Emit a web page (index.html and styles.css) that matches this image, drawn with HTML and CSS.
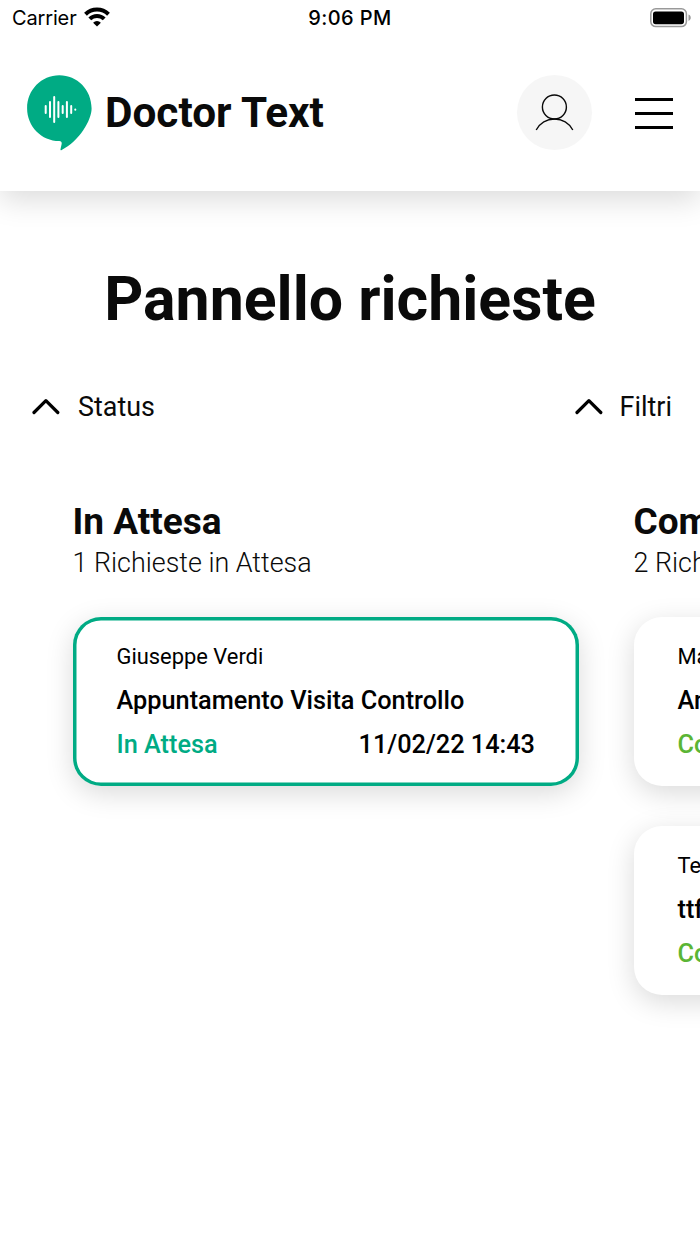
FILE: index.html
```
<!DOCTYPE html>
<html lang="it">
<head>
	<meta charset="utf-8">
	<title>Doctor Text</title>
	<link rel="stylesheet" href="styles.css">
</head>
<body>
	<div class="statusbar">
		<div class="carrier">
			<span>Carrier</span>
			<svg class="wifi" width="26" height="20" viewBox="0 0 26 20">
				<g fill="none" stroke="#000" stroke-width="4">
					<path d="M1.5 7.2a16.4 16.4 0 0 1 23 0"/>
					<path d="M5.8 11.9a10.2 10.2 0 0 1 14.4 0"/>
				</g>
				<path d="M13 19.4l-3.9-3.7a5.4 5.4 0 0 1 7.8 0z"/>
			</svg>
		</div>
		<span class="clock">9:06 PM</span>
		<svg class="battery" width="42" height="20" viewBox="0 0 42 20">
			<rect x="0.8" y="0.8" width="35.6" height="17.8" rx="5" fill="none" stroke="#999" stroke-width="1.5"/>
			<rect x="3" y="3.4" width="31" height="12.8" rx="2.6"/>
			<path d="M38.5 6.6c3 1.2 3 5.2 0 6.4z" fill="#999"/>
		</svg>
	</div>

	<header class="header">
		<div class="brand">
			<svg class="logo" width="65" height="76" viewBox="0 0 65 76">
				<path fill="#00ab84" d="M32.3 0.3C50.3 0.3 64.6 14.8 64.6 33.5C64.6 45 52.5 66 34.3 75.2Q33.2 75.6 33.5 74.3L34.7 68.7Q34.9 66.1 32.3 66C14.5 66 0.1 51.5 0.1 33.2C0.1 14.8 14.5 0.3 32.3 0.3Z"/>
				<g stroke="#fff" stroke-width="2" stroke-linecap="round">
					<path d="M18.7 31v7M23 27v15M27.2 22v25M31.4 27v15M35.7 31v7M39.9 27v15M44.2 31v7M48.3 34.5v0.2"/>
				</g>
			</svg>
			<span class="brand-name">Doctor Text</span>
		</div>
		<div class="actions">
			<div class="avatar">
				<svg width="75" height="75" viewBox="0 0 75 75" fill="none" stroke="#0a0a0a" stroke-width="1.4">
					<circle cx="37.4" cy="32" r="12"/>
					<path d="M19.2 55a20.7 20.7 0 0 1 36.6 0"/>
				</svg>
			</div>
			<div class="menu">
				<span></span>
				<span></span>
				<span></span>
			</div>
		</div>
	</header>

	<main>
		<h1>Pannello richieste</h1>

		<div class="toolbar">
			<div class="toggle">
				<svg width="28" height="17" viewBox="0 0 28 17"><path d="M2 14.5L13.9 2.6L25.8 14.5"/></svg>
				<span>Status</span>
			</div>
			<div class="toggle">
				<svg width="28" height="17" viewBox="0 0 28 17"><path d="M2 14.5L13.9 2.6L25.8 14.5"/></svg>
				<span>Filtri</span>
			</div>
		</div>

		<div class="board">
			<section class="column">
				<h2>In Attesa</h2>
				<p class="count">1 Richieste in Attesa</p>
				<div class="card waiting">
					<p class="name">Giuseppe Verdi</p>
					<p class="subject">Appuntamento Visita Controllo</p>
					<div class="meta">
						<span class="state">In Attesa</span>
						<span>11/02/22 14:43</span>
					</div>
				</div>
			</section>
			<section class="column">
				<h2>Completate</h2>
				<p class="count">2 Richieste Completate</p>
				<div class="card done">
					<p class="name">Mario Rossi</p>
					<p class="subject">Analisi</p>
					<div class="meta">
						<span class="state">Completata</span>
					</div>
				</div>
				<div class="card done">
					<p class="name">Test</p>
					<p class="subject">ttf</p>
					<div class="meta">
						<span class="state">Completata</span>
					</div>
				</div>
			</section>
		</div>
	</main>
</body>
</html>
```
FILE: styles.css
```
* {
	margin: 0;
	padding: 0;
	box-sizing: border-box;
}

body {
	height: 1244px;
	overflow: hidden;
	background: #fff;
	color: #0a0a0a;
	font-family: Roboto, "Liberation Sans", sans-serif;
}

svg {
	display: block;
	flex: none;
}

/* phone status bar, keeps the header shadow below it */
.statusbar {
	position: relative;
	z-index: 1;
	display: grid;
	grid-template-columns: 1fr auto 1fr;
	align-items: center;
	height: 37px;
	padding: 0 8px 2px 12px;
	background: #fff;
	color: #000;
	font-family: Inter, sans-serif;
	font-size: 20px;
}

.carrier {
	display: flex;
	align-items: center;
	gap: 7px;
	letter-spacing: -0.15px;
}

.wifi {
	margin-top: -2px;
}

.clock {
	margin-left: -4px;
	font-weight: 500;
	letter-spacing: 0.4px;
}

.battery {
	justify-self: end;
}

/* header */
.header {
	display: flex;
	justify-content: space-between;
	align-items: center;
	height: 154px;
	padding: 0 27px 3px;
	background: #fff;
	box-shadow: 0 9px 28px rgba(0, 0, 0, 0.14);
}

.brand {
	display: flex;
	align-items: center;
	gap: 13px;
}

.brand-name {
	font-size: 42.3px;
	font-weight: 700;
}

.actions {
	display: flex;
	align-items: center;
	gap: 43px;
}

.avatar {
	width: 75px;
	height: 75px;
	border-radius: 50%;
	background: #f6f6f6;
}

.menu {
	display: flex;
	flex-direction: column;
	gap: 11px;
	width: 38px;
	margin-top: 2px;
}

.menu span {
	height: 3px;
	background: #000;
}

h1 {
	margin-top: 72px;
	font-size: 60.8px;
	line-height: 74px;
	text-align: center;
}

.toolbar {
	display: flex;
	justify-content: space-between;
	margin-top: 49px;
	padding: 0 28px 0 32px;
	font-size: 26.9px;
	line-height: 40px;
}

.toggle {
	display: flex;
	align-items: center;
	gap: 18px;
}

.toggle:last-child {
	gap: 17px;
}

.toggle span {
	padding-top: 1px;
	margin-bottom: -1px;
}

.toggle path {
	fill: none;
	stroke: #000;
	stroke-width: 3.2;
	stroke-linecap: round;
	stroke-linejoin: round;
}

.board {
	display: flex;
	gap: 54.5px;
	margin-top: 74px;
	padding: 0 0 50px 72.5px;
	overflow: hidden;
}

.column {
	flex: none;
	width: 506.5px;
}

h2 {
	font-size: 37px;
	line-height: 44px;
}

.count {
	padding-top: 1px;
	font-size: 26.9px;
	font-weight: 300;
	line-height: 36px;
}

.card {
	height: 169px;
	margin-top: 40px;
	padding: 17.5px 44px;
	border-radius: 28px;
	background: #fff;
	box-shadow: 0 7px 28px rgba(0, 0, 0, 0.15);
	color: #000;
	font-size: 25.3px;
	font-weight: 500;
	line-height: 44.2px;
}

.count + .card {
	margin-top: 36px;
}

.name {
	font-size: 21.9px;
	font-weight: 400;
}

.meta {
	display: flex;
	justify-content: space-between;
}

.waiting {
	box-shadow: inset 0 0 0 3.5px #00ab84, 0 7px 28px rgba(0, 0, 0, 0.15);
}

.waiting .state {
	color: #00ab84;
}

.done .state {
	color: #5bb535;
}
```
